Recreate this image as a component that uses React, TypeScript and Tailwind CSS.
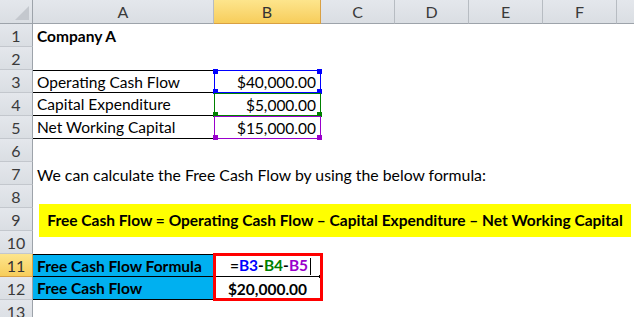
import React from "react";

const FONT = { fontFamily: "Lato, 'Open Sans', sans-serif" };

function RowHead({ n, active }: { n: number; active?: boolean }) {
  return (
    <div
      className={
        "w-[33px] h-full shrink-0 flex items-center justify-center pt-[1px] text-[16px] border-r border-b box-border " +
        (active
          ? "bg-gradient-to-b from-[#fde58c] to-[#f7cd5a] border-r-[#d9a043] border-b-[#d9a043] text-[#333]"
          : "bg-gradient-to-b from-[#e4e7ec] to-[#dadee3] border-r-[#9da3aa] border-b-[#c3c7cd] text-[#3a3a3a]")
      }
    >
      {n}
    </div>
  );
}

function Handle({ pos, color }: { pos: string; color: string }) {
  return <div className={"absolute w-[5px] h-[5px] " + pos + " " + color} />;
}

function Row({ n, children, active }: { n: number; children?: React.ReactNode; active?: boolean }) {
  return (
    <div className="flex h-[23px]">
      <RowHead n={n} active={active} />
      {children}
    </div>
  );
}

export default function App() {
  const cols = ["C", "D", "E", "F"];
  return (
    <div className="w-[634px] h-[317px] overflow-hidden bg-white relative text-black" style={FONT}>
      {/* column header */}
      <div className="flex h-[24px]">
        <div className="w-[33px] shrink-0 bg-gradient-to-b from-[#e4e7ec] to-[#dadee3] border-r border-b border-[#9da3aa] box-border relative">
          <div className="absolute right-[3px] bottom-[3px] w-0 h-0 border-l-[14px] border-l-transparent border-b-[14px] border-b-[#c4c8ce]" />
        </div>
        <div className="w-[181px] shrink-0 bg-gradient-to-b from-[#e4e7ec] to-[#dadee3] border-r border-b border-r-[#b7bcc2] border-b-[#9da3aa] box-border flex items-center justify-center text-[16px] text-[#3a3a3a]">
          A
        </div>
        <div className="w-[107px] shrink-0 bg-gradient-to-b from-[#fde58c] to-[#f7cd5a] border-r border-b border-[#d9a043] box-border flex items-center justify-center text-[16px] text-[#333]">
          B
        </div>
        {cols.map((c) => (
          <div
            key={c}
            className="w-[74px] shrink-0 bg-gradient-to-b from-[#e4e7ec] to-[#dadee3] border-r border-b border-r-[#b7bcc2] border-b-[#9da3aa] box-border flex items-center justify-center text-[16px] text-[#3a3a3a]"
          >
            {c}
          </div>
        ))}
        <div className="flex-1 bg-gradient-to-b from-[#e4e7ec] to-[#dadee3] border-b border-[#9da3aa] box-border" />
      </div>

      <Row n={1}>
        <div className="w-[181px] pl-[4px] pt-[2px] flex items-center text-[15.5px] font-bold">Company A</div>
      </Row>
      <Row n={2} />
      <Row n={3}>
        <div className="w-[181px] pl-[4px] pt-[2px] flex items-center text-[15.5px] border-t border-b border-black box-border">Operating Cash Flow</div>
        <div className="w-[107px] relative border border-[#0000ff] box-border flex items-center justify-end pr-[4px] pt-[2px] text-[15.5px]">
          $40,000.00
          <Handle pos="-left-[2px] -top-[2px]" color="bg-[#0000ff]" />
          <Handle pos="-right-[2px] -top-[2px]" color="bg-[#0000ff]" />
          <Handle pos="-left-[2px] -bottom-[2px]" color="bg-[#0000ff]" />
          <Handle pos="-right-[2px] -bottom-[2px]" color="bg-[#0000ff]" />
        </div>
      </Row>
      <Row n={4}>
        <div className="w-[181px] pl-[4px] pt-[2px] flex items-center text-[15.5px] border-b border-black box-border">Capital Expenditure</div>
        <div className="w-[107px] relative border border-[#008000] box-border flex items-center justify-end pr-[4px] pt-[2px] text-[15.5px]">
          $5,000.00
          <Handle pos="-left-[2px] -bottom-[2px]" color="bg-[#008000]" />
          <Handle pos="-right-[2px] -bottom-[2px]" color="bg-[#008000]" />
        </div>
      </Row>
      <Row n={5}>
        <div className="w-[181px] pl-[4px] pt-[2px] flex items-center text-[15.5px] border-b border-black box-border">Net Working Capital</div>
        <div className="w-[107px] relative border border-[#9900cc] box-border flex items-center justify-end pr-[4px] pt-[2px] text-[15.5px]">
          $15,000.00
          <Handle pos="-left-[2px] -bottom-[2px]" color="bg-[#9900cc]" />
          <Handle pos="-right-[2px] -bottom-[2px]" color="bg-[#9900cc]" />
        </div>
      </Row>
      <Row n={6} />
      <Row n={7}>
        <div className="pl-[4px] pt-[2px] flex items-center text-[15.8px] whitespace-nowrap">
          We can calculate the Free Cash Flow by using the below formula:
        </div>
      </Row>
      <Row n={8} />
      <Row n={9} />
      <Row n={10} />
      <Row n={11} active>
        <div className="w-[181px] pl-[4px] pt-[2px] flex items-center text-[15.5px] font-bold bg-[#00b0f0] border-t border-b border-black box-border">
          Free Cash Flow Formula
        </div>
        <div className="w-[107px] relative flex items-center justify-center pl-[6px] pt-[2px] text-[15.5px] font-bold border-b border-black box-border">
          <span>
            =<span className="text-[#0000ff]">B3</span>-<span className="text-[#008000]">B4</span>-
            <span className="text-[#9900cc]">B5</span>
          </span>
          <span className="inline-block w-px h-[17px] bg-black ml-[2px]" />
          <div className="absolute -right-[1px] -bottom-[2px] w-[3px] h-[3px] bg-black" />
        </div>
      </Row>
      <Row n={12}>
        <div className="w-[181px] pl-[4px] pt-[2px] flex items-center text-[15.5px] font-bold bg-[#00b0f0] border-b border-black box-border">
          Free Cash Flow
        </div>
        <div className="w-[107px] flex items-center justify-center pt-[2px] text-[15.5px] font-bold">$20,000.00</div>
      </Row>
      <Row n={13} />

      {/* red selection box over B11:B12 */}
      <div className="absolute left-[213px] top-[253px] w-[110px] h-[48px] border-[3px] border-[#ff0000] box-border" />

      {/* yellow formula text box */}
      <div className="absolute left-[39px] top-[204px] w-[592px] h-[33px] bg-[#ffff00] flex items-center justify-center pt-[1px] text-[15.5px] font-bold whitespace-nowrap">
        Free Cash Flow = Operating Cash Flow – Capital Expenditure – Net Working Capital
      </div>
    </div>
  );
}
